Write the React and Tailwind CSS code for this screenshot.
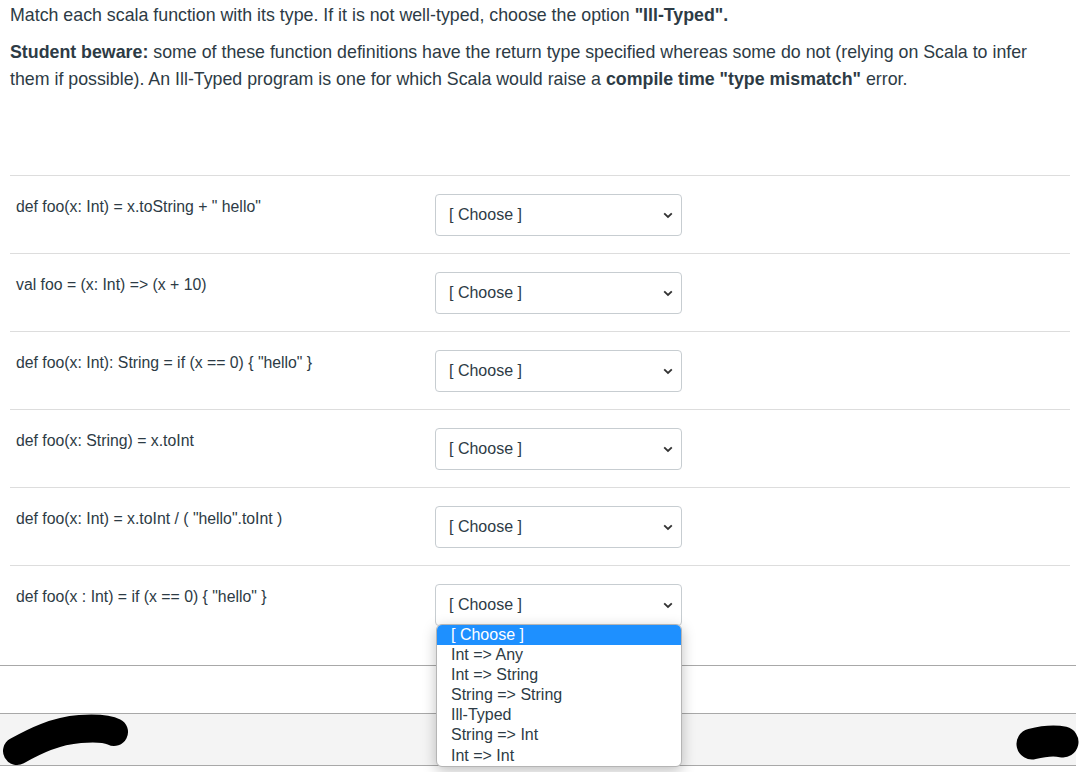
import React from 'react';

const rows = [
  'def foo(x: Int) = x.toString + " hello"',
  'val foo = (x: Int) => (x + 10)',
  'def foo(x: Int): String = if (x == 0) { "hello" }',
  'def foo(x: String) = x.toInt',
  'def foo(x: Int) = x.toInt / ( "hello".toInt )',
  'def foo(x : Int) = if (x == 0) { "hello" }',
];

const options = [
  '[ Choose ]',
  'Int => Any',
  'Int => String',
  'String => String',
  'Ill-Typed',
  'String => Int',
  'Int => Int',
];

const Chevron = () => (
  <svg width="10" height="7" viewBox="0 0 10 7" className="shrink-0">
    <path d="M1.2 1.3 L5 5 L8.8 1.3" fill="none" stroke="#333" strokeWidth="1.8" />
  </svg>
);

const ChooseSelect = () => (
  <div className="w-[247px] h-[42px] mt-[18px] border border-[#c7cdd1] rounded-[4px] bg-white flex items-center justify-between pl-[13px] pr-[8px]">
    <span className="text-[16px] text-[#2d3b45]">[ Choose ]</span>
    <Chevron />
  </div>
);

const MatchRow = ({ label, last }) => (
  <div className={`flex items-start h-[78px] ${last ? '' : 'border-b border-[#dddddd]'}`}>
    <div className="w-[425px] pl-[6px] pt-[21px] text-[15.8px] leading-[20px] text-[#2d3b45]">{label}</div>
    <ChooseSelect />
  </div>
);

export default function App() {
  return (
    <div className="relative bg-white min-h-[772px] overflow-hidden font-['Liberation_Sans',Arial,sans-serif] text-[#2d3b45]">
      <div className="ml-[10px] w-[1048px] pt-[2px] text-[17.8px] leading-[27px]">
        <p>
          Match each scala function with its type. If it is not well-typed, choose the option <strong>"Ill-Typed".</strong>
        </p>
        <p className="mt-[10px]">
          <strong>Student beware:</strong> some of these function definitions have the return type specified whereas some do not (relying on Scala to infer them if possible). An Ill-Typed program is one for which Scala would raise a <strong>compile time "type mismatch"</strong> error.
        </p>
      </div>

      <div className="ml-[10px] w-[1060px] mt-[82px] border-t border-[#dddddd]">
        {rows.map((r, i) => (
          <MatchRow key={i} label={r} last={i === rows.length - 1} />
        ))}
      </div>

      <div className="w-[1076px] mt-[21px] border-t border-[#a8a8a8]" />
      <div className="w-[1076px] mt-[47px] h-[53px] border-t border-b border-[#a8a8a8] bg-[#f4f4f4]" />

      {/* redaction scribbles */}
      <svg className="absolute left-0 top-[712px]" width="140" height="56" viewBox="0 0 140 56">
        <path d="M17 39 C35 29 55 19 80 17 C95 16 108 17 114 20" fill="none" stroke="#000" strokeWidth="28" strokeLinecap="round" />
      </svg>
      <svg className="absolute left-[1010px] top-[722px]" width="69" height="42" viewBox="0 0 69 42">
        <path d="M22 22 C30 20 44 18 53 20" fill="none" stroke="#000" strokeWidth="31" strokeLinecap="round" />
      </svg>

      {/* open select list */}
      <div className="absolute left-[436px] top-[624px] w-[246px] bg-white border border-[#b5b5b5] rounded-[6px] overflow-hidden shadow-[0_4px_14px_rgba(0,0,0,0.25)] text-[16px] leading-[20.1px]">
        {options.map((o, i) => (
          <div key={o} className={`pl-[14px] ${i === 0 ? 'bg-[#1e90ff] text-white' : 'text-[#2d3b45]'}`}>
            {o}
          </div>
        ))}
      </div>
    </div>
  );
}
